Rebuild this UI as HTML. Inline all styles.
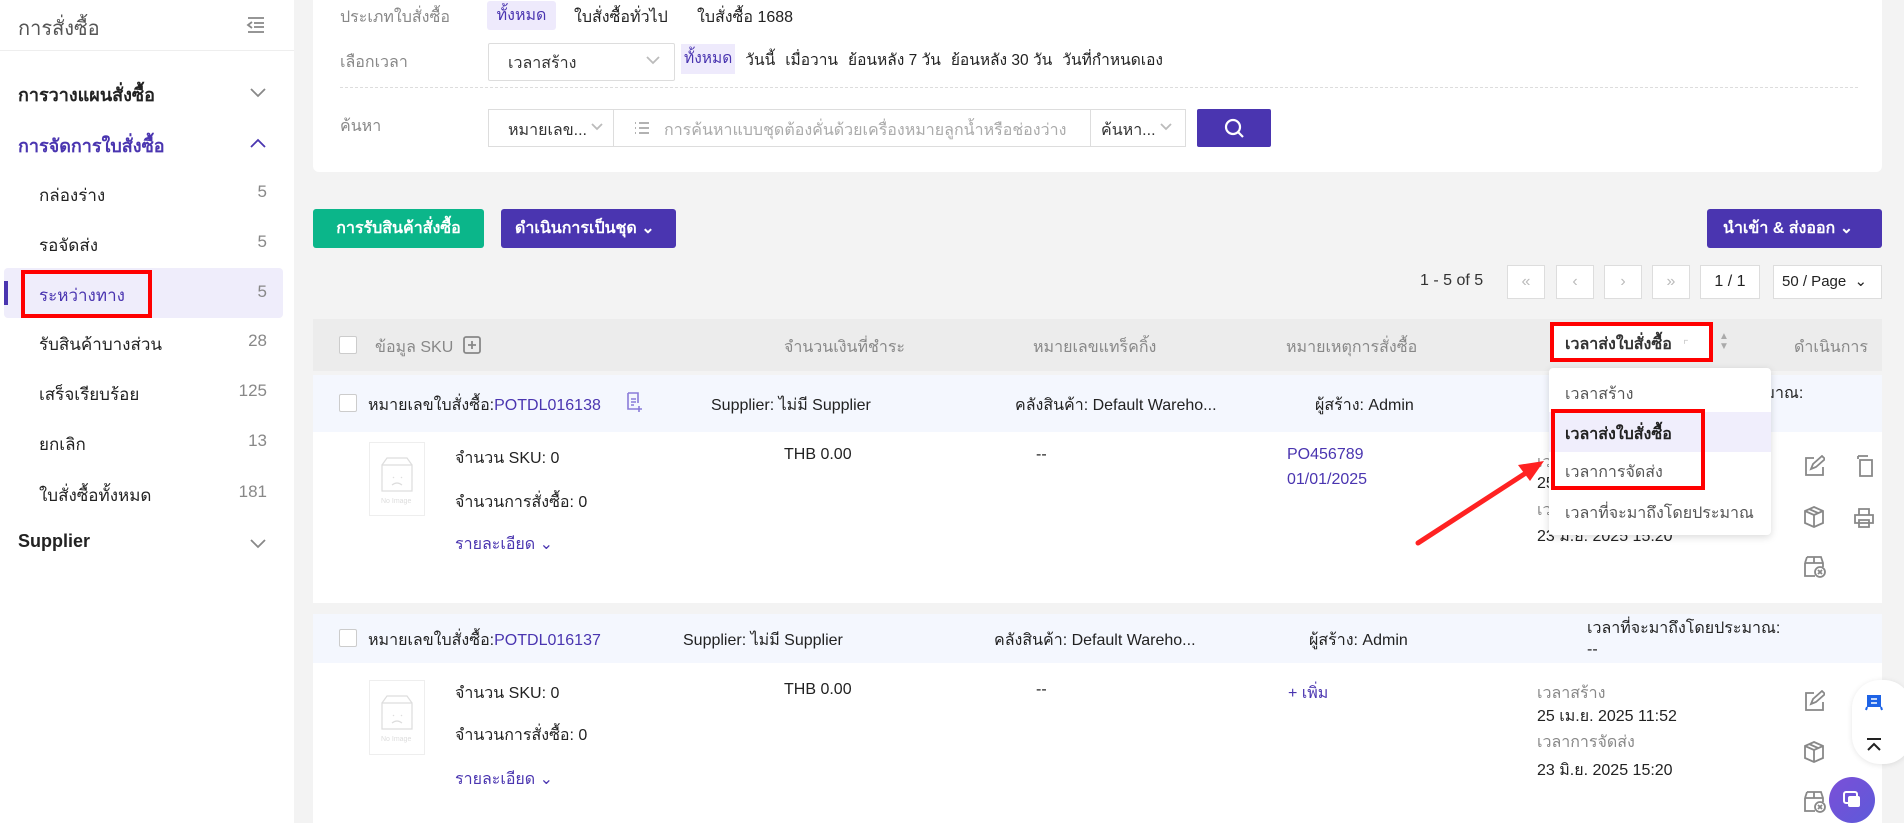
<!DOCTYPE html>
<html><head><meta charset="utf-8"><style>
*{box-sizing:border-box;margin:0;padding:0}
body{width:1904px;height:823px;overflow:hidden;background:#f3f3f3;font-family:"Liberation Sans","Noto Sans CJK SC",sans-serif;font-size:16px;color:#222;position:relative}
.a{position:absolute;white-space:nowrap}
.g{color:#888}
.p{color:#4a35b0}
.cb{position:absolute;width:18px;height:18px;border:1px solid #ccc;background:#fff;border-radius:2px}
.box{position:absolute;border:1px solid #ddd;background:#fff}
.ic{position:absolute;stroke:#888;fill:none;stroke-width:1.8}
.hd{color:#888;font-weight:normal}
</style></head><body>
<!-- sidebar -->
<div class="a" style="left:0;top:0;width:294px;height:823px;background:#fff"></div>
<div class="a" style="left:0;top:50px;width:294px;height:1px;background:#eee"></div>
<div class="a" style="left:18px;top:12px;font-size:20px;color:#555">การสั่งซื้อ</div>
<svg class="ic" style="left:246px;top:16px" width="20" height="18" viewBox="0 0 20 18"><path d="M2 2h16M8 7h10M8 11h10M2 16h16M6 6l-4 3 4 3"/></svg>
<div class="a" style="left:18px;top:80px;font-size:18px;font-weight:bold">การวางแผนสั่งซื้อ</div>
<svg class="ic" style="left:250px;top:88px" width="16" height="10"><path d="M1 1l7 7 7-7"/></svg>
<div class="a p" style="left:18px;top:131px;font-size:18px;font-weight:bold">การจัดการใบสั่งซื้อ</div>
<svg class="ic" style="left:250px;top:138px;stroke:#4a35b0" width="16" height="10"><path d="M1 9l7-7 7 7"/></svg>
<div class="a" style="left:4px;top:268px;width:279px;height:50px;background:#efedfb;border-radius:4px"></div>
<div class="a" style="left:4px;top:281px;width:4px;height:24px;background:#4a35b0"></div>
<div class="a" style="left:21px;top:270px;width:131px;height:48px;border:4px solid #f00"></div>
<div class="a" style="left:39px;top:182px;font-size:17px">กล่องร่าง</div><div class="a g" style="right:1637px;top:182px;font-size:17px">5</div>
<div class="a" style="left:39px;top:232px;font-size:17px">รอจัดส่ง</div><div class="a g" style="right:1637px;top:232px;font-size:17px">5</div>
<div class="a p" style="left:39px;top:282px;font-size:17px">ระหว่างทาง</div><div class="a g" style="right:1637px;top:282px;font-size:17px">5</div>
<div class="a" style="left:39px;top:331px;font-size:17px">รับสินค้าบางส่วน</div><div class="a g" style="right:1637px;top:331px;font-size:17px">28</div>
<div class="a" style="left:39px;top:381px;font-size:17px">เสร็จเรียบร้อย</div><div class="a g" style="right:1637px;top:381px;font-size:17px">125</div>
<div class="a" style="left:39px;top:431px;font-size:17px">ยกเลิก</div><div class="a g" style="right:1637px;top:431px;font-size:17px">13</div>
<div class="a" style="left:39px;top:482px;font-size:17px">ใบสั่งซื้อทั้งหมด</div><div class="a g" style="right:1637px;top:482px;font-size:17px">181</div>
<div class="a" style="left:18px;top:531px;font-size:18px;font-weight:bold">Supplier</div>
<svg class="ic" style="left:250px;top:539px" width="16" height="10"><path d="M1 1l7 7 7-7"/></svg>

<!-- filter card -->
<div class="a" style="left:313px;top:0;width:1569px;height:172px;background:#fff;border-radius:0 0 6px 6px"></div>
<div class="a g" style="left:340px;top:5px">ประเภทใบสั่งซื้อ</div>
<div class="a p" style="left:487px;top:1px;width:69px;height:29px;background:#eeeafc;border-radius:3px;text-align:center;line-height:29px">ทั้งหมด</div>
<div class="a" style="left:574px;top:5px">ใบสั่งซื้อทั่วไป</div>
<div class="a" style="left:697px;top:5px">ใบสั่งซื้อ 1688</div>
<div class="a g" style="left:340px;top:50px">เลือกเวลา</div>
<div class="box" style="left:488px;top:43px;width:187px;height:38px;border-radius:2px"></div>
<div class="a" style="left:508px;top:51px;color:#333">เวลาสร้าง</div>
<svg class="ic" style="left:646px;top:56px;stroke:#bbb" width="14" height="9"><path d="M1 1l6 6 6-6"/></svg>
<div class="a" style="left:681px;top:44px;height:30px;display:flex;align-items:center;gap:10px;font-size:15.5px">
<span class="p" style="background:#eeeafc;padding:0 3px;line-height:30px">ทั้งหมด</span><span>วันนี้</span><span>เมื่อวาน</span><span>ย้อนหลัง 7 วัน</span><span>ย้อนหลัง 30 วัน</span><span>วันที่กำหนดเอง</span></div>
<div class="a" style="left:340px;top:87px;width:1518px;border-top:1px dashed #ddd"></div>
<div class="a g" style="left:340px;top:114px">ค้นหา</div>
<div class="box" style="left:488px;top:109px;width:698px;height:38px"></div>
<div class="a" style="left:613px;top:109px;width:1px;height:38px;background:#ddd"></div>
<div class="a" style="left:1090px;top:109px;width:1px;height:38px;background:#ddd"></div>
<div class="a" style="left:508px;top:118px;color:#333">หมายเลข...</div>
<svg class="ic" style="left:591px;top:123px;stroke:#bbb" width="12" height="8"><path d="M1 1l5 5 5-5"/></svg>
<svg class="ic" style="left:634px;top:120px;stroke:#999;stroke-width:1.5" width="16" height="16"><path d="M5 3h10M5 8h10M5 13h10M1 3h1M1 8h1M1 13h1"/></svg>
<div class="a" style="left:664px;top:118px;color:#aaa;width:420px;overflow:hidden">การค้นหาแบบชุดต้องคั่นด้วยเครื่องหมายลูกน้ำหรือช่องว่าง</div>
<div class="a" style="left:1101px;top:118px;color:#333">ค้นหา...</div>
<svg class="ic" style="left:1160px;top:123px;stroke:#bbb" width="12" height="8"><path d="M1 1l5 5 5-5"/></svg>
<div class="a" style="left:1197px;top:109px;width:74px;height:38px;background:#4a35b0;border-radius:2px"></div>
<svg class="ic" style="left:1224px;top:118px;stroke:#fff;stroke-width:2.2" width="22" height="22"><circle cx="9" cy="9" r="7"/><path d="M14 14l5 5"/></svg>

<!-- buttons -->
<div class="a" style="left:313px;top:209px;width:171px;height:39px;background:#0bb68a;border-radius:3px;color:#fff;font-weight:bold;text-align:center;line-height:39px">การรับสินค้าสั่งซื้อ</div>
<div class="a" style="left:501px;top:209px;width:175px;height:39px;background:#4a35b0;border-radius:3px;color:#fff;font-weight:bold;line-height:39px;padding-left:14px">ดำเนินการเป็นชุด ⌄</div>
<div class="a" style="left:1707px;top:209px;width:175px;height:39px;background:#4a35b0;border-radius:3px;color:#fff;font-weight:bold;line-height:39px;padding-left:16px">นำเข้า &amp; ส่งออก ⌄</div>

<!-- pagination -->
<div class="a" style="left:1420px;top:272px;color:#333">1 - 5 of 5</div>
<div class="box" style="left:1507px;top:265px;width:38px;height:34px;color:#bbb;text-align:center;line-height:32px">«</div>
<div class="box" style="left:1556px;top:265px;width:38px;height:34px;color:#bbb;text-align:center;line-height:32px">‹</div>
<div class="box" style="left:1604px;top:265px;width:38px;height:34px;color:#bbb;text-align:center;line-height:32px">›</div>
<div class="box" style="left:1652px;top:265px;width:38px;height:34px;color:#bbb;text-align:center;line-height:32px">»</div>
<div class="box" style="left:1700px;top:265px;width:60px;height:34px;text-align:center;line-height:32px">1 / 1</div>
<div class="box" style="left:1773px;top:265px;width:109px;height:34px;line-height:32px;padding-left:8px;font-size:15px">50 / Page &nbsp;⌄</div>

<!-- table header -->
<div class="a" style="left:313px;top:319px;width:1569px;height:52px;background:#ececec"></div>
<div class="cb" style="left:339px;top:336px"></div>
<div class="a hd" style="left:375px;top:335px">ข้อมูล SKU</div>
<svg class="ic" style="left:463px;top:336px" width="18" height="18"><rect x="1" y="1" width="16" height="16" rx="2"/><path d="M9 5v8M5 9h8"/></svg>
<div class="a hd" style="left:784px;top:335px">จำนวนเงินที่ชำระ</div>
<div class="a hd" style="left:1033px;top:335px">หมายเลขแทร็คกิ้ง</div>
<div class="a hd" style="left:1286px;top:335px">หมายเหตุการสั่งซื้อ</div>
<div class="a" style="left:1550px;top:322px;width:163px;height:40px;border:4px solid #f00;background:#fff"></div>
<div class="a" style="left:1565px;top:332px;font-weight:bold;color:#333">เวลาส่งใบสั่งซื้อ</div>
<div class="a" style="left:1683px;top:338px;color:#ccc;font-size:12px">⌜</div>
<div class="a" style="left:1719px;top:332px;color:#aaa;font-size:10px;line-height:10px">▲<br>▼</div>
<div class="a hd" style="left:1794px;top:335px">ดำเนินการ</div>

<!-- row 1 -->
<div class="a" style="left:313px;top:375px;width:1569px;height:57px;background:#f4f7fe"></div>
<div class="a" style="left:313px;top:432px;width:1569px;height:171px;background:#fff"></div>
<div class="cb" style="left:339px;top:394px"></div>
<div class="a" style="left:368px;top:393px">หมายเลขใบสั่งซื้อ:<span class="p">POTDL016138</span></div>
<svg class="ic" style="left:624px;top:391px;stroke:#8a7bd8;stroke-width:1.6" width="20" height="22"><path d="M4 2h10v10M4 2v16h8M7 8h5M7 11h5M7 14h3M15 15v6M12 18h6"/></svg>
<div class="a" style="left:711px;top:393px">Supplier: ไม่มี Supplier</div>
<div class="a" style="left:1015px;top:393px">คลังสินค้า: Default Wareho...</div>
<div class="a" style="left:1315px;top:393px">ผู้สร้าง: Admin</div>
<div class="a" style="left:1610px;top:381px">เวลาที่จะมาถึงโดยประมาณ:</div>
<div class="box" style="left:369px;top:442px;width:56px;height:74px;border-color:#eee"></div>
<svg class="ic" style="left:378px;top:455px;stroke:#ddd;stroke-width:1.2" width="38" height="52"><path d="M4 10h30v26H4zM4 10l5-7h20l5 7M15 22l1 1M23 22l1 1M14 30q5-4 10 0"/><text x="3" y="48" font-size="7" fill="#ddd" stroke="none">No Image</text></svg>
<div class="a" style="left:455px;top:446px">จำนวน SKU: 0</div>
<div class="a" style="left:455px;top:490px">จำนวนการสั่งซื้อ: 0</div>
<div class="a p" style="left:455px;top:532px">รายละเอียด ⌄</div>
<div class="a" style="left:784px;top:446px">THB 0.00</div>
<div class="a" style="left:1036px;top:446px">--</div>
<div class="a p" style="left:1287px;top:446px">PO456789</div>
<div class="a p" style="left:1287px;top:471px">01/01/2025</div>
<div class="a g" style="left:1537px;top:450px">เวลาสร้าง</div>
<div class="a" style="left:1537px;top:471px">25 เม.ย. 2025 11:52</div>
<div class="a g" style="left:1537px;top:498px">เวลาการจัดส่ง</div>
<div class="a" style="left:1537px;top:524px">23 มิ.ย. 2025 15:20</div>
<svg class="ic" style="left:1803px;top:455px" width="22" height="22"><path d="M11 3H3v17h17v-8M8 14l2-5 9-8 3 3-9 8z"/></svg>
<svg class="ic" style="left:1853px;top:455px" width="22" height="22"><path d="M5 1h10M5 1v3M7 5h12v16H7z"/></svg>
<svg class="ic" style="left:1803px;top:505px" width="22" height="24"><path d="M11 2l9 4v12l-9 4-9-4V6zM2 6l9 4 9-4M11 10v12M6 4l9 4"/></svg>
<svg class="ic" style="left:1853px;top:507px" width="22" height="22"><path d="M6 8V2h10v6M2 8h18v8H2zM6 13h10v7H6z"/></svg>
<svg class="ic" style="left:1803px;top:555px" width="24" height="24"><path d="M2 8h18M11 2v6M4 2h14l2 6v4M2 8v13h10M4 2L2 8"/><circle cx="17" cy="17" r="5"/><path d="M15 15l4 4M19 15l-4 4"/></svg>

<!-- row 2 -->
<div class="a" style="left:313px;top:614px;width:1569px;height:49px;background:#f4f7fe"></div>
<div class="a" style="left:313px;top:663px;width:1569px;height:160px;background:#fff"></div>
<div class="cb" style="left:339px;top:629px"></div>
<div class="a" style="left:368px;top:628px">หมายเลขใบสั่งซื้อ:<span class="p">POTDL016137</span></div>
<div class="a" style="left:683px;top:628px">Supplier: ไม่มี Supplier</div>
<div class="a" style="left:994px;top:628px">คลังสินค้า: Default Wareho...</div>
<div class="a" style="left:1309px;top:628px">ผู้สร้าง: Admin</div>
<div class="a" style="left:1587px;top:616px">เวลาที่จะมาถึงโดยประมาณ:</div>
<div class="a" style="left:1587px;top:641px">--</div>
<div class="box" style="left:369px;top:680px;width:56px;height:75px;border-color:#eee"></div>
<svg class="ic" style="left:378px;top:693px;stroke:#ddd;stroke-width:1.2" width="38" height="52"><path d="M4 10h30v26H4zM4 10l5-7h20l5 7M15 22l1 1M23 22l1 1M14 30q5-4 10 0"/><text x="3" y="48" font-size="7" fill="#ddd" stroke="none">No Image</text></svg>
<div class="a" style="left:455px;top:681px">จำนวน SKU: 0</div>
<div class="a" style="left:455px;top:723px">จำนวนการสั่งซื้อ: 0</div>
<div class="a p" style="left:455px;top:767px">รายละเอียด ⌄</div>
<div class="a" style="left:784px;top:681px">THB 0.00</div>
<div class="a" style="left:1036px;top:681px">--</div>
<div class="a p" style="left:1288px;top:681px">+ เพิ่ม</div>
<div class="a g" style="left:1537px;top:681px">เวลาสร้าง</div>
<div class="a" style="left:1537px;top:704px">25 เม.ย. 2025 11:52</div>
<div class="a g" style="left:1537px;top:730px">เวลาการจัดส่ง</div>
<div class="a" style="left:1537px;top:758px">23 มิ.ย. 2025 15:20</div>
<svg class="ic" style="left:1803px;top:690px" width="22" height="22"><path d="M11 3H3v17h17v-8M8 14l2-5 9-8 3 3-9 8z"/></svg>
<svg class="ic" style="left:1803px;top:740px" width="22" height="24"><path d="M11 2l9 4v12l-9 4-9-4V6zM2 6l9 4 9-4M11 10v12M6 4l9 4"/></svg>
<svg class="ic" style="left:1803px;top:790px" width="24" height="24"><path d="M2 8h18M11 2v6M4 2h14l2 6v4M2 8v13h10M4 2L2 8"/><circle cx="17" cy="17" r="5"/><path d="M15 15l4 4M19 15l-4 4"/></svg>

<!-- right strip -->
<div class="a" style="left:1882px;top:0;width:22px;height:823px;background:#f3f3f3"></div>

<!-- dropdown -->
<div class="a" style="left:1549px;top:368px;width:222px;height:167px;background:#fff;border-radius:4px;box-shadow:0 2px 8px rgba(0,0,0,.15)"></div>
<div class="a g" style="left:1565px;top:382px;color:#555">เวลาสร้าง</div>
<div class="a" style="left:1549px;top:412px;width:222px;height:40px;background:#f0eefc"></div>
<div class="a" style="left:1565px;top:422px;font-weight:bold;color:#222">เวลาส่งใบสั่งซื้อ</div>
<div class="a" style="left:1565px;top:460px;color:#555">เวลาการจัดส่ง</div>
<div class="a" style="left:1565px;top:501px;color:#555">เวลาที่จะมาถึงโดยประมาณ</div>
<div class="a" style="left:1551px;top:409px;width:154px;height:81px;border:4px solid #f00"></div>
<svg class="a" style="left:1410px;top:455px" width="140" height="95"><path d="M8 88L122 14" stroke="#f22" stroke-width="5" stroke-linecap="round"/><path d="M134 6l-26 4 12 16z" fill="#f22"/></svg>

<!-- floating -->
<div class="a" style="left:1852px;top:680px;width:60px;height:84px;background:#fff;border-radius:28px;box-shadow:0 1px 6px rgba(0,0,0,.1)"></div>
<svg class="a" style="left:1864px;top:692px" width="20" height="20"><path d="M3 3h14v12H3z" fill="#1d63e6"/><path d="M7 7h6M7 11h6" stroke="#fff" stroke-width="1.5"/><path d="M3 15l-1 3M17 15l1 3" stroke="#1d63e6" stroke-width="2"/></svg>
<svg class="a" style="left:1864px;top:737px" width="20" height="16"><path d="M3 2h14M4 13l6-6 6 6" stroke="#222" stroke-width="2" fill="none"/></svg>
<div class="a" style="left:1829px;top:777px;width:46px;height:46px;border-radius:50%;background:linear-gradient(135deg,#7b4fd8,#5d5ad9)"></div>
<svg class="a" style="left:1841px;top:789px" width="22" height="22"><rect x="3" y="3" width="13" height="11" rx="2" fill="none" stroke="#fff" stroke-width="2"/><rect x="7" y="7" width="12" height="11" rx="2" fill="#fff"/></svg>
</body></html>
